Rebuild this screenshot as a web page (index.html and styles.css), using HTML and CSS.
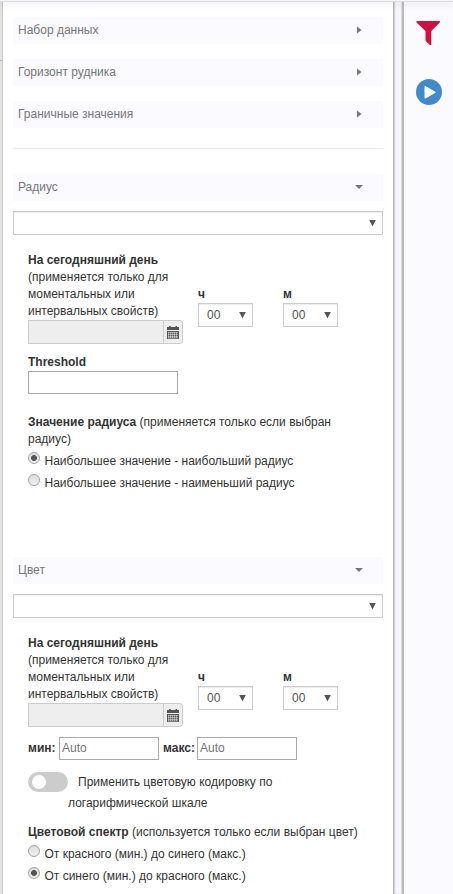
FILE: index.html
```html
<!DOCTYPE html>
<html lang="ru">
<head>
<meta charset="utf-8">
<title>Фильтр</title>
<link rel="stylesheet" href="styles.css">
</head>
<body>
<div class="topbar"></div>
<div class="layout">
  <div class="edge"></div>
  <main class="panel">
    <div class="head">Набор данных<svg class="caret" viewBox="0 0 8 8"><path d="M2 .5 6.5 4 2 7.5z"/></svg></div>
    <div class="head">Горизонт рудника<svg class="caret" viewBox="0 0 8 8"><path d="M2 .5 6.5 4 2 7.5z"/></svg></div>
    <div class="head">Граничные значения<svg class="caret" viewBox="0 0 8 8"><path d="M2 .5 6.5 4 2 7.5z"/></svg></div>
    <hr>
    <section class="section radius">
      <div class="head">Радиус<svg class="caret" viewBox="0 0 8 8"><path d="M0 2h8L4 6z"/></svg></div>
      <div class="select wide"><svg class="arrow" viewBox="0 0 7 8"><path d="M.2 1h6.6L3.5 7.5z"/></svg></div>
      <div class="body">
        <div class="when">
          <div class="date">
            <p><b>На сегодняшний день</b><br>(применяется только для моментальных или интервальных свойств)</p>
            <div class="group"><span class="field"></span><span class="addon"><svg class="cal" viewBox="0 0 12 13"><path d="M2 0h1.5v1h5V0H10v1h2v3H0V1h2zM0 5h12v8H0z"/><path class="grid" d="M1 6.5h10M1 8.5h10M1 10.5h10M1 12h10M1.5 6v6M3.5 6v6M5.5 6v6M7.5 6v6M9.5 6v6"/></svg></span></div>
          </div>
          <div class="time"><b>ч</b><div class="select">00<svg class="arrow" viewBox="0 0 7 8"><path d="M.2 1h6.6L3.5 7.5z"/></svg></div></div>
          <div class="time"><b>м</b><div class="select">00<svg class="arrow" viewBox="0 0 7 8"><path d="M.2 1h6.6L3.5 7.5z"/></svg></div></div>
        </div>
        <div class="threshold"><b>Threshold</b><input type="text"></div>
        <p class="caption"><b>Значение радиуса</b> (применяется только если выбран радиус)</p>
        <div class="option"><i class="radio on"></i>Наибольшее значение - наибольший радиус</div>
        <div class="option"><i class="radio"></i>Наибольшее значение - наименьший радиус</div>
      </div>
    </section>
    <section class="section">
      <div class="head">Цвет<svg class="caret" viewBox="0 0 8 8"><path d="M0 2h8L4 6z"/></svg></div>
      <div class="select wide"><svg class="arrow" viewBox="0 0 7 8"><path d="M.2 1h6.6L3.5 7.5z"/></svg></div>
      <div class="body">
        <div class="when">
          <div class="date">
            <p><b>На сегодняшний день</b><br>(применяется только для моментальных или интервальных свойств)</p>
            <div class="group"><span class="field"></span><span class="addon"><svg class="cal" viewBox="0 0 12 13"><path d="M2 0h1.5v1h5V0H10v1h2v3H0V1h2zM0 5h12v8H0z"/><path class="grid" d="M1 6.5h10M1 8.5h10M1 10.5h10M1 12h10M1.5 6v6M3.5 6v6M5.5 6v6M7.5 6v6M9.5 6v6"/></svg></span></div>
          </div>
          <div class="time"><b>ч</b><div class="select">00<svg class="arrow" viewBox="0 0 7 8"><path d="M.2 1h6.6L3.5 7.5z"/></svg></div></div>
          <div class="time"><b>м</b><div class="select">00<svg class="arrow" viewBox="0 0 7 8"><path d="M.2 1h6.6L3.5 7.5z"/></svg></div></div>
        </div>
        <div class="range"><b class="min">мин:</b><input type="text" placeholder="Auto"><b class="max">макс:</b><input type="text" placeholder="Auto"></div>
        <div class="log"><span class="switch"></span><p>Применить цветовую кодировку по логарифмической шкале</p></div>
        <p class="caption spectrum"><b>Цветовой спектр</b> (используется только если выбран цвет)</p>
        <div class="option"><i class="radio"></i>От красного (мин.) до синего (макс.)</div>
        <div class="option"><i class="radio on"></i>От синего (мин.) до красного (макс.)</div>
      </div>
    </section>
  </main>
  <div class="splitter"></div>
  <aside class="tools">
    <svg class="funnel" viewBox="0 0 24 24"><path fill="#d0103f" d="M.5 0h23.3v1.5L15.3 10v14h-1.5L9.5 19.8V10L.5 1.5z"/></svg>
    <svg class="play" viewBox="0 0 26 26"><circle cx="13" cy="13" r="13" fill="#428bca"/><path d="M9 7.3 19.3 13.3 9 19.3z" fill="#fff" stroke="#fff" stroke-width="1" stroke-linejoin="round"/></svg>
  </aside>
</div>
</body>
</html>
```
FILE: styles.css
```css
* { box-sizing: border-box; }
body {
  margin: 0;
  height: 894px;
  overflow: hidden;
  background: #fff;
  color: #333;
  font: 12px/17px "Liberation Sans", Arial, sans-serif;
}
p { margin: 0; }
.topbar {
  position: absolute;
  top: 0;
  left: 0;
  right: 0;
  height: 1px;
  background: #f5f5fb;
  box-shadow: 0 1px 0 #ddd, 0 2px 7px rgba(0, 0, 0, .3);
}
.layout { display: flex; height: 894px; }
.edge {
  width: 3px;
  background: linear-gradient(#bbb, #bbb) 0 60px / 3px 1px no-repeat, #e2e2e2;
  border-right: 1px solid #c8c8c8;
}
.panel { width: 390px; padding: 17px 10px 0; background: #fff; }
.head {
  display: flex;
  align-items: center;
  justify-content: space-between;
  height: 27px;
  margin-bottom: 15px;
  padding: 0 20px 1px 5px;
  background: #fafaff;
  color: #777;
}
.caret { width: 8px; height: 8px; fill: #777; }
hr { height: 1px; margin: 20px 0 25px; border: 0; background: #eaeaea; }
.section .head { margin-bottom: 10px; }
.radius { height: 383px; }
.select {
  display: flex;
  align-items: center;
  width: 55px;
  height: 24px;
  padding: 0 6px 0 8px;
  border: 1px solid #ccc;
  background: #fff;
  box-shadow: inset 0 1px 1px rgba(0, 0, 0, .075);
  color: #555;
}
.select.wide { width: 370px; }
.arrow { width: 7px; height: 8px; margin-left: auto; fill: #555; }
.body { padding: 16px 15px 0; }
.when { display: flex; height: 93px; }
.date { width: 155px; margin-right: 15px; }
.date p { width: 150px; height: 69px; padding-top: 1px; }
.group { display: flex; height: 24px; }
.field { width: 136px; border: 1px solid #ccc; background: #eee; }
.addon {
  display: flex;
  align-items: center;
  justify-content: center;
  width: 19px;
  border: 1px solid #ccc;
  border-left: 0;
  border-radius: 0 4px 4px 0;
  background: #eee;
}
.cal { width: 12px; height: 13px; fill: #555; }
.cal .grid { fill: none; stroke: #eee; stroke-width: .5; }
.time { width: 55px; margin-right: 30px; padding-top: 35px; }
.time b { display: block; height: 17px; }
input {
  display: block;
  width: 150px;
  height: 23px;
  margin: 0;
  padding: 0 2px 2px;
  border: 1px solid #a9a9a9;
  background: #fff;
  color: #555;
  font: inherit;
}
input::placeholder { color: #757575; opacity: 1; }
.threshold { padding-top: 10px; }
.threshold b { display: block; height: 17px; }
.caption { height: 35px; margin-top: 19px; padding-top: 1px; }
.option { display: flex; height: 22px; line-height: 29px; }
.caption + .option { margin-top: -1px; }
.radio {
  width: 12px;
  height: 12px;
  margin: 5px 4.5px 0 0;
  border: 1px solid #a3a3a3;
  border-radius: 50%;
  background: linear-gradient(#dedede, #eee);
}
.radio.on { background: radial-gradient(circle, #555 0 2.6px, transparent 3.3px), linear-gradient(#dedede, #eee); }
.range { display: flex; align-items: center; height: 23px; margin-top: 10px; }
.range input { width: 100px; }
.min { width: 31px; }
.max { width: 34px; margin-left: 4px; }
.log { display: flex; margin-top: 12px; line-height: 21px; }
.switch {
  flex: none;
  width: 40px;
  height: 20px;
  padding: 3px 4px;
  border-radius: 10px;
  background: #ccc;
}
.switch::before {
  content: "";
  display: block;
  width: 14px;
  height: 14px;
  border-radius: 50%;
  background: #fff;
}
.log p { width: 230px; text-indent: 10px; }
.spectrum { height: 18px; margin-top: 9px; white-space: nowrap; }
.splitter {
  width: 11px;
  border: 1px solid #b5b5b5;
  border-width: 0 2px 0 1px;
  border-right-color: #bbb;
  background: #f5f5fb;
  box-shadow: inset 1px 0 1px #ccc, inset -1px 0 1px #ddd;
}
.tools { flex: 1; padding: 21px 0 0 12px; background: #fafaff; }
.tools svg { display: block; }
.funnel { width: 24px; height: 24px; }
.play { width: 26px; height: 26px; margin-top: 34px; }
```
